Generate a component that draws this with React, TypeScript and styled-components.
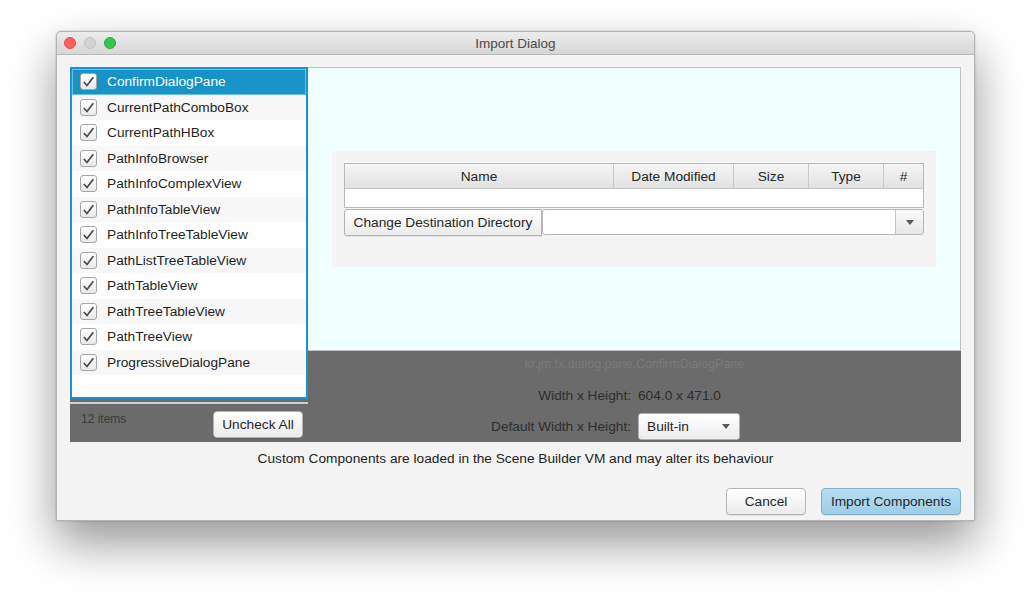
import React from "react";
import styled, { createGlobalStyle } from "styled-components";

const Global = createGlobalStyle`
  html, body { margin: 0; padding: 0; background: #ffffff; }
  body { font-family: "Liberation Sans", Arial, sans-serif; font-size: 13.7px; color: #222; }
  * { box-sizing: border-box; }
`;

const Page = styled.div`
  width: 1031px;
  height: 602px;
  padding: 31px 0 0 56px;
  overflow: hidden;
`;

const Window = styled.div`
  width: 919px;
  height: 490px;
  background: #f4f4f4;
  border: 1px solid #b4b4b4;
  border-radius: 5px 5px 0 0;
  box-shadow: 0 22px 48px rgba(0, 0, 0, 0.42), 0 0 2px rgba(0, 0, 0, 0.25);
  display: flex;
  flex-direction: column;
`;

const TitleBar = styled.div`
  height: 23px;
  flex: none;
  position: relative;
  display: flex;
  align-items: center;
  justify-content: center;
  background: linear-gradient(#ececec, #d6d6d6);
  border-bottom: 1px solid #b9b9b9;
  border-radius: 5px 5px 0 0;
  color: #4c4c4c;
  font-size: 13.5px;
`;

const Lights = styled.div`
  position: absolute;
  left: 7px;
  top: 5px;
  display: flex;
  gap: 8px;
`;

const Light = styled.span<{ $c: string; $b: string }>`
  width: 12px;
  height: 12px;
  border-radius: 50%;
  background: ${(p) => p.$c};
  border: 1px solid ${(p) => p.$b};
`;

const Body = styled.div`
  flex: 1;
  display: flex;
  flex-direction: column;
  padding: 12px 13px 5px 13px;
`;

const Main = styled.div`
  height: 375px;
  flex: none;
  display: flex;
  background: #6b6b6b;
`;

const LeftCol = styled.div`
  width: 238px;
  flex: none;
  display: flex;
  flex-direction: column;
`;

const List = styled.div`
  height: 332px;
  flex: none;
  background: #ffffff;
  border: 2px solid #1b94ce;
  display: flex;
  flex-direction: column;
`;

const Row = styled.div<{ $alt?: boolean; $sel?: boolean }>`
  height: 25.5px;
  flex: none;
  display: flex;
  align-items: center;
  gap: 10px;
  background: ${(p) => (p.$sel ? "#1893c8" : p.$alt ? "#f7f7f7" : "#ffffff")};
  color: ${(p) => (p.$sel ? "#ffffff" : "#1f1f1f")};
  border: ${(p) => (p.$sel ? "1px solid #6cc0e4" : "none")};
  padding-left: ${(p) => (p.$sel ? "7px" : "8px")};
`;

const Box = styled.span`
  width: 17px;
  height: 17px;
  flex: none;
  border: 1px solid #a6a6a6;
  border-radius: 3px;
  background: linear-gradient(#ffffff, #e9e9e9);
  display: flex;
  align-items: center;
  justify-content: center;
`;

const ListFooter = styled.div`
  flex: 1;
  display: flex;
  flex-direction: column;
`;

const Separator = styled.div`
  height: 2px;
  margin-top: 3px;
  background: #cfcfcf;
`;

const FooterRow = styled.div`
  flex: 1;
  display: flex;
  justify-content: space-between;
  align-items: flex-start;
  padding: 0 5px 3px 11px;
`;

const Count = styled.span`
  font-size: 12px;
  color: #3a3a3a;
  margin-top: 8px;
`;

const Button = styled.button<{ $w: number; $primary?: boolean }>`
  width: ${(p) => p.$w}px;
  height: 27px;
  font-family: "Liberation Sans", Arial, sans-serif;
  font-size: 13.7px;
  color: #262626;
  border-radius: 4px;
  border: 1px solid ${(p) => (p.$primary ? "#86aec6" : "#b3b3b3")};
  background: ${(p) =>
    p.$primary ? "linear-gradient(#b6def2, #9fcde7)" : "linear-gradient(#ffffff, #ebebeb)"};
  box-shadow: 0 1px 0 rgba(0, 0, 0, 0.08);
  padding: 0;
  flex: none;
`;

const UncheckButton = styled(Button)`
  margin-top: 7px;
`;

const RightCol = styled.div`
  flex: 1;
  display: flex;
  flex-direction: column;
`;

const Preview = styled.div`
  height: 284px;
  flex: none;
  background: #f0ffff;
  border: 1px solid #c2c2c2;
  border-left: none;
  display: flex;
  align-items: center;
  justify-content: center;
`;

const Panel = styled.div`
  width: 604px;
  height: 116px;
  background: #f4f4f4;
  padding: 12px;
  display: flex;
  flex-direction: column;
`;

const Table = styled.div`
  border: 1px solid #b8b8b8;
  background: #ffffff;
  display: flex;
  flex-direction: column;
`;

const Header = styled.div`
  height: 25px;
  display: grid;
  grid-template-columns: 1fr 120px 75px 75px 40px;
  background: linear-gradient(#f5f5f5, #e1e1e1);
  border-bottom: 1px solid #c4c4c4;
`;

const HeadCell = styled.div`
  display: flex;
  align-items: center;
  justify-content: center;
  border-left: 1px solid #c9c9c9;
  color: #262626;
  &:first-child { border-left: none; }
`;

const TableBody = styled.div`
  height: 18px;
`;

const DirRow = styled.div`
  height: 26px;
  margin-top: 1px;
  display: flex;
`;

const DirButton = styled(Button)`
  border-radius: 3px 0 0 3px;
`;

const Combo = styled.div`
  flex: 1;
  display: flex;
  border: 1px solid #b5b5b5;
  border-radius: 3px;
  background: #ffffff;
  overflow: hidden;
`;

const ComboField = styled.div`
  flex: 1;
`;

const ArrowBox = styled.div`
  width: 28px;
  flex: none;
  border-left: 1px solid #c4c4c4;
  background: linear-gradient(#fbfbfb, #e6e6e6);
  display: flex;
  align-items: center;
  justify-content: center;
`;

const Arrow = styled.span`
  width: 0;
  height: 0;
  border-left: 4px solid transparent;
  border-right: 4px solid transparent;
  border-top: 5px solid #595959;
`;

const Info = styled.div`
  flex: 1;
  display: flex;
  flex-direction: column;
  align-items: stretch;
`;

const ClassName = styled.div`
  text-align: center;
  font-size: 12.5px;
  color: #7a7a7a;
  margin-top: 6px;
  height: 15px;
`;

const InfoGrid = styled.div`
  display: grid;
  grid-template-columns: 1fr 1fr;
  column-gap: 7px;
  row-gap: 4px;
  margin-top: 10px;
  align-items: center;
`;

const Label = styled.div`
  text-align: right;
  color: #2e2e2e;
`;

const Value = styled.div`
  color: #2e2e2e;
  height: 27px;
  display: flex;
  align-items: center;
`;

const BuiltIn = styled.div`
  width: 102px;
  height: 27px;
  border: 1px solid #b0b0b0;
  border-radius: 3px;
  background: linear-gradient(#ffffff, #ececec);
  display: flex;
  align-items: center;
  justify-content: space-between;
  padding: 0 9px 0 8px;
  color: #222;
`;

const Note = styled.div`
  margin-top: 9px;
  height: 16px;
  line-height: 16px;
  text-align: center;
  color: #222;
`;

const Actions = styled.div`
  margin-top: 21px;
  display: flex;
  justify-content: flex-end;
  gap: 15px;
`;

const Check = () => (
  <svg width="15" height="15" viewBox="0 0 15 15">
    <polyline points="2.8,8 6,11.5 12.3,3.2" fill="none" stroke="#4a4a4a" strokeWidth="1.7" />
  </svg>
);

const items = [
  "ConfirmDialogPane",
  "CurrentPathComboBox",
  "CurrentPathHBox",
  "PathInfoBrowser",
  "PathInfoComplexView",
  "PathInfoTableView",
  "PathInfoTreeTableView",
  "PathListTreeTableView",
  "PathTableView",
  "PathTreeTableView",
  "PathTreeView",
  "ProgressiveDialogPane",
];

export default function App() {
  return (
    <Page>
      <Global />
      <Window>
        <TitleBar>
          <Lights>
            <Light $c="#fc605c" $b="#de4a45" />
            <Light $c="#d3d3d3" $b="#c2c2c2" />
            <Light $c="#34c84a" $b="#27a83a" />
          </Lights>
          Import Dialog
        </TitleBar>
        <Body>
          <Main>
            <LeftCol>
              <List>
                {items.map((it, i) => (
                  <Row key={it} $sel={i === 0} $alt={i % 2 === 1}>
                    <Box>
                      <Check />
                    </Box>
                    {it}
                  </Row>
                ))}
              </List>
              <ListFooter>
                <Separator />
                <FooterRow>
                  <Count>12 items</Count>
                  <UncheckButton $w={90}>Uncheck All</UncheckButton>
                </FooterRow>
              </ListFooter>
            </LeftCol>
            <RightCol>
              <Preview>
                <Panel>
                  <Table>
                    <Header>
                      <HeadCell>Name</HeadCell>
                      <HeadCell>Date Modified</HeadCell>
                      <HeadCell>Size</HeadCell>
                      <HeadCell>Type</HeadCell>
                      <HeadCell>#</HeadCell>
                    </Header>
                    <TableBody />
                  </Table>
                  <DirRow>
                    <DirButton $w={198}>Change Destination Directory</DirButton>
                    <Combo>
                      <ComboField />
                      <ArrowBox>
                        <Arrow />
                      </ArrowBox>
                    </Combo>
                  </DirRow>
                </Panel>
              </Preview>
              <Info>
                <ClassName>kr.jm.fx.dialog.pane.ConfirmDialogPane</ClassName>
                <InfoGrid>
                  <Label>Width x Height:</Label>
                  <Value>604.0 x 471.0</Value>
                  <Label>Default Width x Height:</Label>
                  <Value>
                    <BuiltIn>
                      Built-in
                      <Arrow />
                    </BuiltIn>
                  </Value>
                </InfoGrid>
              </Info>
            </RightCol>
          </Main>
          <Note>Custom Components are loaded in the Scene Builder VM and may alter its behaviour</Note>
          <Actions>
            <Button $w={80}>Cancel</Button>
            <Button $w={140} $primary>
              Import Components
            </Button>
          </Actions>
        </Body>
      </Window>
    </Page>
  );
}
